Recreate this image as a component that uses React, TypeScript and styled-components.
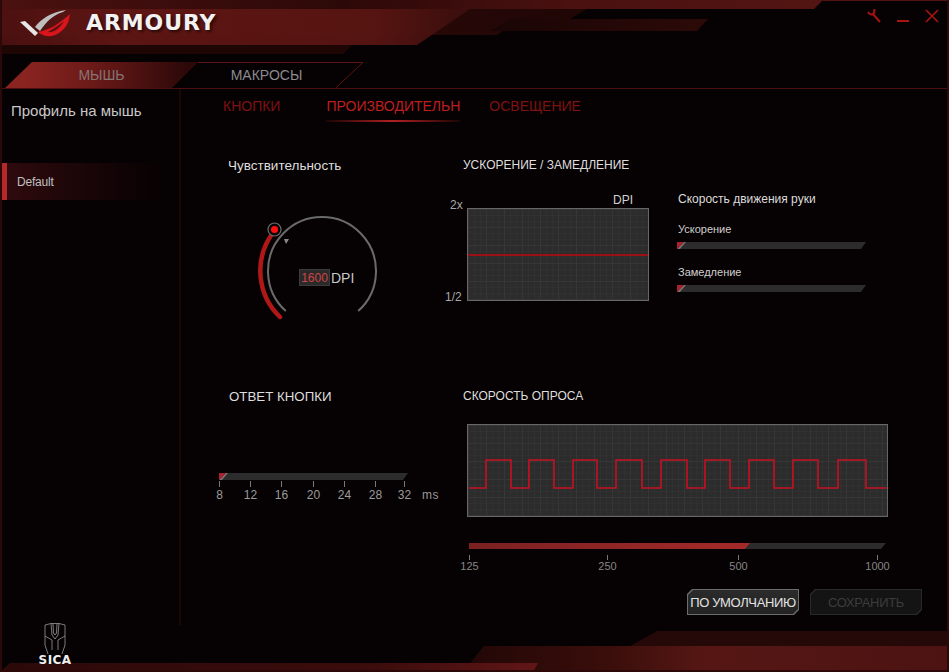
import * as React from 'react'
import styled, { createGlobalStyle } from 'styled-components'

const GlobalStyle = createGlobalStyle`
html, body {
  margin: 0;
  padding: 0;
  background: #060102;
}
* { box-sizing: border-box; }
`

const Window = styled.div`
position: relative;
width: 949px;
height: 672px;
overflow: hidden;
display: flex;
flex-direction: column;
background: #060102;
font-family: "Liberation Sans", Arial, sans-serif;
color: #ccc;
`

const Frame = styled.div`
position: absolute;
inset: 0;
border: solid 2px #2c0808;
border-top: none;
pointer-events: none;
z-index: 3;
`

const Chrome = styled.svg`
position: absolute;
left: 0;
top: 0;
z-index: 0;
`

/* header */
const Header = styled.header`
position: relative;
z-index: 1;
height: 89px;
flex: none;
display: flex;
flex-direction: column;
border-bottom: solid 1px #4c1010;
`

const TitleBar = styled.div`
height: 62px;
display: flex;
align-items: flex-start;
padding: 8px 10px 0 20px;
`

const Logo = styled.svg`
flex: none;
margin-right: 14px;
`

const Title = styled.div`
font-family: "DejaVu Sans", sans-serif;
font-weight: 700;
font-size: 22px;
line-height: 30px;
letter-spacing: 0.9px;
color: #f2f2f2;
text-shadow: 2px 2px 3px rgba(0,0,0,.6);
`

const Controls = styled.div`
margin-left: auto;
display: flex;
gap: 15px;
padding-top: 1px;
`

const TabRow = styled.nav`
height: 26px;
display: flex;
padding-left: 5px;
`

const MouseTab = styled.div`
width: 193px;
display: flex;
align-items: center;
justify-content: center;
font-size: 14px;
color: #857474;
background: linear-gradient(90deg, #8a2420 10%, #6b1a18 45%, #2c0808 95%);
clip-path: polygon(27px 0, 100% 0, 167px 100%, 0 100%);
`

const MacroTab = styled.div`
position: relative;
width: 193px;
margin-left: -27px;
padding-right: 2px;
display: flex;
align-items: center;
justify-content: center;
font-size: 14px;
color: #8b8b90;
span { position: relative; }
`

const MacroOutline = styled.svg`
position: absolute;
left: 0;
top: 0;
`

/* page body */
const Body = styled.div`
position: relative;
z-index: 1;
flex: 1;
display: flex;
min-height: 0;
`

const Sidebar = styled.aside`
width: 181px;
flex: none;
display: flex;
flex-direction: column;
border-right: solid 2px #1c0505;
margin-bottom: 47px;
`

const SidebarTitle = styled.div`
font-size: 15px;
color: #c8c8c8;
padding: 13px 0 0 11px;
line-height: 18px;
`

const ProfileRow = styled.div`
margin: 43px 16px 0 1px;
height: 37px;
display: flex;
align-items: center;
font-size: 12px;
color: #c0c0c0;
letter-spacing: -0.2px;
border-left: solid 6px #b42a2a;
padding-left: 10px;
background: linear-gradient(90deg, #2e0a0d, #060102);
`

const MouseBadge = styled.div`
margin-top: auto;
margin-bottom: -41px;
width: 110px;
display: flex;
flex-direction: column;
align-items: center;
`

const MouseName = styled.div`
font-family: "DejaVu Sans", sans-serif;
font-weight: 700;
font-size: 12px;
line-height: 11px;
color: #efefef;
letter-spacing: 0.4px;
`

const Main = styled.main`
flex: 1;
display: flex;
flex-direction: column;
min-width: 0;
`

const SubNav = styled.div`
height: 33px;
display: flex;
padding-left: 42px;
font-size: 14px;
line-height: 34px;
`

const SubNavItem = styled.div<{ $active?: boolean, $gap: number }>`
position: relative;
margin-right: ${p => p.$gap}px;
white-space: nowrap;
color: ${p => p.$active ? '#bd1f1f' : '#7f1212'};
${p => p.$active ? `
  &::after {
    content: '';
    position: absolute;
    left: 0;
    right: 0;
    bottom: 0;
    height: 2px;
    background: linear-gradient(90deg, #1c0505, #b02020 50%, #1c0505);
  }
` : ''}
`

const Panels = styled.div`
flex: 1;
display: grid;
grid-template-columns: 264px 1fr;
grid-template-rows: 264px 1fr;
`

const Panel = styled.section`
display: flex;
flex-direction: column;
min-width: 0;
`

const PanelTitle = styled.h3<{ $top: number, $left: number, $size: number }>`
margin: 0;
padding: ${p => p.$top}px 0 0 ${p => p.$left}px;
font-weight: 400;
font-size: ${p => p.$size}px;
line-height: 16px;
color: #dedede;
white-space: nowrap;
`

const Dial = styled.div`
position: relative;
margin: 16px 0 0 37px;
width: 160px;
height: 150px;
`

const DialValue = styled.div`
position: absolute;
left: 81px;
top: 79px;
display: flex;
align-items: center;
font-size: 14px;
color: #c8c8c8;
`

const DpiInput = styled.div`
width: 31px;
height: 17px;
margin-right: 1px;
text-align: center;
font-size: 12px;
line-height: 16px;
color: #d04444;
background: #2a2a2a;
border: solid 1px #3b3b3b;
`

const AccelRow = styled.div`
display: flex;
margin-top: 19px;
`

const AxisColumn = styled.div`
width: 22px;
height: 106px;
margin-top: 6px;
display: flex;
flex-direction: column;
justify-content: space-between;
font-size: 12px;
line-height: 14px;
color: #a8a8a8;
`

const AxisTop = styled.span`
padding-left: 5px;
`

const ChartColumn = styled.div`
width: 182px;
display: flex;
flex-direction: column;
`

const ChartCaption = styled.div`
height: 16px;
padding-right: 16px;
text-align: right;
font-size: 12px;
line-height: 16px;
color: #d0d0d0;
`

const ChartBox = styled.div<{ $height: number }>`
position: relative;
height: ${p => p.$height}px;
border: solid 1px #676767;
background-color: #2c2c2c;
background-image:
  linear-gradient(#363636 1px, transparent 1px),
  linear-gradient(90deg, #363636 1px, transparent 1px),
  linear-gradient(rgba(255,255,255,.02) 1px, transparent 1px),
  linear-gradient(90deg, rgba(255,255,255,.02) 1px, transparent 1px);
background-size: 18px 18px, 18px 18px, 6px 6px, 6px 6px;
`

const FlatLine = styled.div`
position: absolute;
left: 0;
right: 0;
top: 45px;
height: 2px;
background: #9a1014;
`

const SpeedPanel = styled.div`
margin: 0 0 0 28px;
width: 190px;
`

const SpeedTitle = styled.div`
font-size: 12px;
line-height: 14px;
color: #dcdcdc;
padding-left: 1px;
margin-bottom: 16px;
white-space: nowrap;
`

const SpeedLabel = styled.div`
font-size: 11px;
line-height: 14px;
color: #d0d0d0;
padding-left: 1px;
margin-bottom: 6px;
`

const Track = styled.div<{ $height: number, $width: number }>`
position: relative;
width: ${p => p.$width}px;
height: ${p => p.$height}px;
background: #2c2c2c;
clip-path: polygon(0 0, 100% 0, calc(100% - 5px) 100%, 0 100%);
overflow: hidden;
`

const Thumb = styled.div`
width: 9px;
height: 100%;
background: linear-gradient(135deg, #a52330 50%, #767676 50%, #4a4a4a);
clip-path: polygon(0 0, 100% 0, calc(100% - 6px) 100%, 0 100%);
`

const TrackFill = styled.div`
height: 100%;
background: linear-gradient(90deg, #7a2020, #a52a2a);
clip-path: polygon(0 0, 100% 0, calc(100% - 5px) 100%, 0 100%);
`

const SpeedSlider = styled.div`
margin-bottom: 16px;
`

const ResponseBody = styled.div`
margin: 68px 0 0 38px;
`

const Scale = styled.div`
display: flex;
align-items: flex-start;
`

const ScaleTicks = styled.div<{ $cols: string }>`
display: grid;
grid-template-columns: ${p => p.$cols};
`

const Tick = styled.div<{ $size: number, $color: string, $drop: number, $len: number, $gap: number }>`
width: 1px;
display: flex;
flex-direction: column;
align-items: center;
font-size: ${p => p.$size}px;
color: ${p => p.$color};
white-space: nowrap;
&::before {
  content: '';
  flex: none;
  width: 1px;
  height: ${p => p.$len}px;
  margin: ${p => p.$drop}px 0 ${p => p.$gap}px;
  background: #777;
}
`

const Unit = styled.div`
margin: 8px 0 0 17px;
font-size: 12px;
letter-spacing: 0.6px;
color: #999;
`

const PollingBody = styled.div`
padding-left: 22px;
display: flex;
flex-direction: column;
`

const WaveBox = styled(ChartBox)`
width: 421px;
margin-top: 20px;
`

const Wave = styled.svg`
position: absolute;
left: -1px;
top: -1px;
`

const PollingSlider = styled.div`
margin: 26px 0 0 2px;
`

const Actions = styled.div`
margin: 17px 0 0 220px;
display: flex;
gap: 11px;
`

const Chamfer = styled.button<{ $enabled?: boolean }>`
position: relative;
width: 112px;
height: 26px;
padding: 0;
border: none;
font-family: inherit;
font-size: 13px;
letter-spacing: -0.35px;
white-space: nowrap;
color: ${p => p.$enabled ? '#e2e2e2' : '#3c3c3c'};
background: ${p => p.$enabled ? '#6d6d6d' : '#2a2a2a'};
clip-path: polygon(5px 0, 100% 0, 100% calc(100% - 5px), calc(100% - 5px) 100%, 0 100%, 0 5px);
&::before {
  content: '';
  position: absolute;
  inset: 1px;
  background: ${p => p.$enabled ? 'linear-gradient(#2b2b2b, #232323)' : '#141414'};
  clip-path: polygon(5px 0, 100% 0, 100% calc(100% - 5px), calc(100% - 5px) 100%, 0 100%, 0 5px);
}
span { position: relative; }
`

const RESPONSE_TICKS = ['8', '12', '16', '20', '24', '28', '32']
const POLLING_TICKS = ['125', '250', '500', '1000']

// x positions where the polling signal flips, in px from the chart's left edge
const WAVE_EDGES = [19, 44, 62, 87, 106, 130, 149, 175, 194, 220, 238, 263, 282, 307, 326, 351, 371, 399]

function wavePath () {
  const high = 36
  const low = 64
  let d = `M2 ${low}`
  WAVE_EDGES.forEach((x, i) => {
    const from = i % 2 === 0 ? low : high
    const to = i % 2 === 0 ? high : low
    d += ` L${x} ${from} L${x} ${to}`
  })
  return d + ` L420 ${low}`
}

const App = () => (
  <Window>
    <GlobalStyle />
    <Chrome width={949} height={672} viewBox="0 0 949 672">
      <defs>
        <linearGradient id="topRed" x1="0" x2="1" y1="0" y2="0">
          <stop offset="0" stopColor="#4c1110" />
          <stop offset="0.25" stopColor="#601614" />
          <stop offset="0.8" stopColor="#581512" />
          <stop offset="1" stopColor="#3a0e0d" />
        </linearGradient>
        <linearGradient id="midRed" x1="0" x2="1" y1="0" y2="0">
          <stop offset="0" stopColor="#3c0d0c" />
          <stop offset="1" stopColor="#1f0605" />
        </linearGradient>
        <linearGradient id="stripRed" x1="0" x2="1" y1="0" y2="0">
          <stop offset="0" stopColor="#4a1110" />
          <stop offset="0.42" stopColor="#2c0908" />
          <stop offset="0.7" stopColor="#4a1110" />
          <stop offset="1" stopColor="#531512" />
        </linearGradient>
        <linearGradient id="bandRed" x1="0" x2="1" y1="0" y2="0">
          <stop offset="0" stopColor="#1a0505" />
          <stop offset="1" stopColor="#2c0a08" />
        </linearGradient>
        <linearGradient id="footRed" x1="0" x2="1" y1="0" y2="0">
          <stop offset="0" stopColor="#210706" />
          <stop offset="0.3" stopColor="#3a0e0b" />
          <stop offset="0.5" stopColor="#561714" />
          <stop offset="1" stopColor="#4c1312" />
        </linearGradient>
        <linearGradient id="footLow" x1="0" x2="1" y1="0" y2="0">
          <stop offset="0" stopColor="#2c0909" />
          <stop offset="0.7" stopColor="#3c0c0c" />
          <stop offset="1" stopColor="#611616" />
        </linearGradient>
      </defs>
      <polygon points="0,9 587,9 570,19 520,19 497,35 0,35" fill="url(#midRed)" />
      <polygon points="0,9 470,9 417,45 0,45" fill="url(#topRed)" opacity="0.95" />
      <polygon points="510,19 708,19 697,31 490,31" fill="url(#bandRed)" />
      <polygon points="0,45 352,45 343,54 0,54" fill="#1e0605" />
      <polygon points="0,0 823,0 814,9 0,9" fill="url(#stripRed)" />
      <polygon points="823,0 949,0 949,1 822,1" fill="#531512" />
      <polygon points="657,631 949,631 949,646 630,646" fill="#250908" />
      <polygon points="484,646 949,646 949,672 463,672" fill="url(#footRed)" />
      <polygon points="10,663 538,663 533,672 0,672" fill="url(#footLow)" />
      <rect x="0" y="670" width="949" height="2" fill="#2a0808" />
    </Chrome>
    <Frame />

    <Header>
      <TitleBar>
        <Logo width={52} height={30} viewBox="0 0 52 30">
          <path d="M15 19 C21 11 31 4 46 2 L43 4 C33 7 26 14 20 23 Z" fill="#bfbfbf" />
          <path d="M18 24 C30 22 40 15 50 6 C49 17 43 25 32 28 C26 29 22 27 18 24 Z M28 24 C34 25 40 20 44 13 C38 18 33 21 28 24 Z" fill="#d8141c" fillRule="evenodd" />
          <path d="M0 14 L5 13 L18 25 L15 28 Z" fill="#e6e6e6" />
        </Logo>
        <Title>ARMOURY</Title>
        <Controls>
          <svg width={14} height={14} viewBox="0 0 14 14" fill="none" stroke="#a81510" strokeWidth={2}>
            <path d="M1 3 C2 5 4 6 6 5 L13 13 M6 5 C7 4 8 2 7 0" />
          </svg>
          <svg width={14} height={14} viewBox="0 0 14 14" fill="none" stroke="#a81510" strokeWidth={2}>
            <path d="M1 12 L13 12" />
          </svg>
          <svg width={14} height={14} viewBox="0 0 14 14" fill="none" stroke="#a81510" strokeWidth={1.6}>
            <path d="M1 1 L13 13 M13 1 L1 13" />
          </svg>
        </Controls>
      </TitleBar>
      <TabRow>
        <MouseTab>МЫШЬ</MouseTab>
        <MacroTab>
          <MacroOutline width={193} height={26} viewBox="0 0 193 26">
            <path d="M27 0.5 L192 0.5 L165 25.5" fill="none" stroke="#5c1414" />
          </MacroOutline>
          <span>МАКРОСЫ</span>
        </MacroTab>
      </TabRow>
    </Header>

    <Body>
      <Sidebar>
        <SidebarTitle>Профиль на мышь</SidebarTitle>
        <ProfileRow>Default</ProfileRow>
        <MouseBadge>
          <svg width={24} height={32} viewBox="0 0 24 32" fill="none" stroke="#9a9a9a" strokeWidth={0.8}>
            <path d="M2 2 L8 0.5 L16 0.5 L22 2 L22 22 L19 31 M2 2 L2 22 L5 31" />
            <path d="M8 0.5 L9 12 L12 16 L15 12 L16 0.5 M10 1 L10.5 10 L12 12 L13.5 10 L14 1" />
            <path d="M2 13 L9 17 L9 27 M22 13 L15 17 L15 27" />
          </svg>
          <MouseName>SICA</MouseName>
        </MouseBadge>
      </Sidebar>

      <Main>
        <SubNav>
          <SubNavItem $gap={46}>КНОПКИ</SubNavItem>
          <SubNavItem $gap={29} $active>ПРОИЗВОДИТЕЛЬН</SubNavItem>
          <SubNavItem $gap={0}>ОСВЕЩЕНИЕ</SubNavItem>
        </SubNav>

        <Panels>
          <Panel>
            <PanelTitle $top={36} $left={47} $size={13.5}>Чувствительность</PanelTitle>
            <Dial>
              <svg width={160} height={150} viewBox="218 190 160 150" fill="none">
                <path d="M285.8 311.1 A54 54 0 1 1 358.2 311.1" stroke="#6a6a6a" strokeWidth={2} />
                <path d="M272 234 A64 64 0 0 0 280 317" stroke="#b01818" strokeWidth={4.5} strokeLinecap="round" />
                <circle cx={274.5} cy={229.5} r={6.5} fill="#060102" stroke="#6c6c6c" strokeWidth={1.2} />
                <circle cx={274.5} cy={229.5} r={3.5} fill="#ff1010" />
                <polygon points="284,239 289,239 286,244" fill="#8a8a8a" />
              </svg>
              <DialValue>
                <DpiInput>1600</DpiInput>
                DPI
              </DialValue>
            </Dial>
          </Panel>

          <Panel>
            <PanelTitle $top={35} $left={18} $size={12}>УСКОРЕНИЕ / ЗАМЕДЛЕНИЕ</PanelTitle>
            <AccelRow>
              <AxisColumn>
                <AxisTop>2x</AxisTop>
                <span>1/2</span>
              </AxisColumn>
              <ChartColumn>
                <ChartCaption>DPI</ChartCaption>
                <ChartBox $height={93}><FlatLine /></ChartBox>
              </ChartColumn>
              <SpeedPanel>
                <SpeedTitle>Скорость движения руки</SpeedTitle>
                <SpeedLabel>Ускорение</SpeedLabel>
                <SpeedSlider>
                  <Track $width={189} $height={7}><Thumb /></Track>
                </SpeedSlider>
                <SpeedLabel>Замедление</SpeedLabel>
                <SpeedSlider>
                  <Track $width={189} $height={7}><Thumb /></Track>
                </SpeedSlider>
              </SpeedPanel>
            </AccelRow>
          </Panel>

          <Panel>
            <PanelTitle $top={3} $left={48} $size={13.3}>ОТВЕТ КНОПКИ</PanelTitle>
            <ResponseBody>
              <Track $width={189} $height={7}><Thumb /></Track>
              <Scale>
                <ScaleTicks $cols="31px 31px 32px 31px 31px 29px 1px">
                  {RESPONSE_TICKS.map(t => <Tick key={t} $size={12} $color="#9c9c9c" $drop={1} $len={6} $gap={1}>{t}</Tick>)}
                </ScaleTicks>
                <Unit>ms</Unit>
              </Scale>
            </ResponseBody>
          </Panel>

          <Panel>
            <PanelTitle $top={2} $left={18} $size={12}>СКОРОСТЬ ОПРОСА</PanelTitle>
            <PollingBody>
              <WaveBox $height={93}>
                <Wave width={421} height={93} viewBox="0 0 421 93" fill="none">
                  <path d={wavePath()} stroke="#c81020" strokeWidth={1.6} />
                </Wave>
              </WaveBox>
              <PollingSlider>
                <Track $width={417} $height={6}>
                  <TrackFill style={{ width: `${(281 / 417) * 100}%` }} />
                </Track>
                <Scale>
                  <ScaleTicks $cols="138px 131px 139px 1px">
                    {POLLING_TICKS.map(t => <Tick key={t} $size={11} $color="#858585" $drop={6} $len={5} $gap={0}>{t}</Tick>)}
                  </ScaleTicks>
                </Scale>
              </PollingSlider>
              <Actions>
                <Chamfer $enabled><span>ПО УМОЛЧАНИЮ</span></Chamfer>
                <Chamfer><span>СОХРАНИТЬ</span></Chamfer>
              </Actions>
            </PollingBody>
          </Panel>
        </Panels>
      </Main>
    </Body>
  </Window>
)

export default App
